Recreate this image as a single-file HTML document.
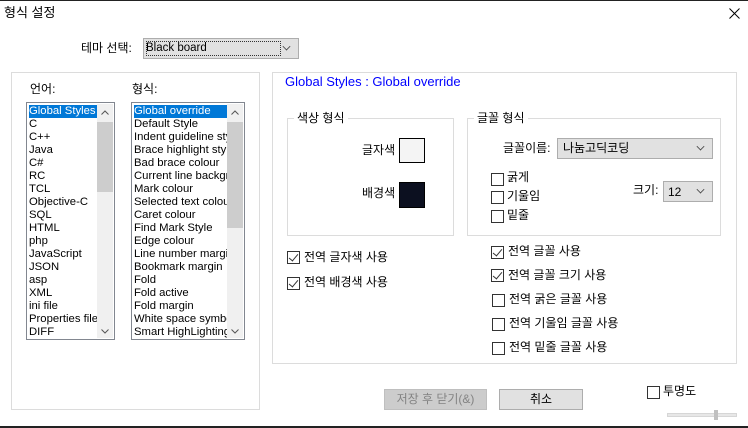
<!DOCTYPE html>
<html><head><meta charset="utf-8"><style>
*{box-sizing:border-box;margin:0;padding:0}
body{width:748px;height:427px;background:#fff;position:relative;overflow:hidden;font-family:"Liberation Sans","Noto Sans CJK KR",sans-serif;font-size:12px;color:#000;border-top:1px solid #222;}
.a{position:absolute;white-space:nowrap;line-height:13px}
.grp{position:absolute;border:1px solid #dcdcdc}
.combo{position:absolute;background:#e1e1e1;border:1px solid #adadad}
.combo .v{position:absolute;right:6px;top:3px;width:7px;height:7px;border-right:1px solid #444;border-bottom:1px solid #444;transform:rotate(45deg) scale(.8)}
.cb{position:absolute;width:13px;height:13px;border:1px solid #333;background:#fff}
.cb.c::after{content:"";position:absolute;left:3px;top:0px;width:4px;height:8px;border-right:1.3px solid #333;border-bottom:1.3px solid #333;transform:rotate(40deg)}
.lb{position:absolute;border:1px solid #828790;background:#fff;overflow:hidden;height:238px}
.lb .it{position:absolute;left:2px;line-height:13px;height:13px;white-space:nowrap;font-size:11.3px}
.sel{background:#0078d7;color:#fff}
.sb{position:absolute;top:1px;bottom:1px;width:16px;background:#f0f0f0}
.th{position:absolute;left:0;width:16px;background:#cdcdcd}
</style></head><body>
<div class="a" style="left:4px;top:5px;font-size:13px">형식 설정</div>
<svg style="position:absolute;left:729px;top:7px" width="11" height="11"><path d="M0.5 0.5L10.5 10.5M10.5 0.5L0.5 10.5" stroke="#000" stroke-width="1"/></svg>

<div class="a" style="left:81px;top:41px">테마 선택:</div>
<div class="combo" style="left:143px;top:37px;width:156px;height:21px"><div style="position:absolute;left:2px;top:2px;width:135px;height:15px;border:1px dotted #333"></div><div class="a" style="left:2px;top:3px;font-size:11.5px">Black board</div><div class="v" style="top:4px;right:8px"></div></div>

<div class="grp" style="left:11px;top:71px;width:249px;height:338px"></div>
<div class="a" style="left:30px;top:82px">언어:</div>
<div class="a" style="left:132px;top:82px">형식:</div>
<div class="lb" style="left:26px;top:101px;width:89px">
<div class="it sel" style="top:2px;width:68px">Global Styles</div>
<div class="it" style="top:15px">C</div><div class="it" style="top:28px">C++</div><div class="it" style="top:41px">Java</div><div class="it" style="top:54px">C#</div><div class="it" style="top:67px">RC</div><div class="it" style="top:80px">TCL</div><div class="it" style="top:93px">Objective-C</div><div class="it" style="top:106px">SQL</div><div class="it" style="top:119px">HTML</div><div class="it" style="top:132px">php</div><div class="it" style="top:145px">JavaScript</div><div class="it" style="top:158px">JSON</div><div class="it" style="top:171px">asp</div><div class="it" style="top:184px">XML</div><div class="it" style="top:197px">ini file</div><div class="it" style="top:210px">Properties file</div><div class="it" style="top:223px">DIFF</div>
<div class="sb" style="left:70px"><svg style="position:absolute;left:4px;top:6px" width="8" height="5"><path d="M0.5 4.5L4 1L7.5 4.5" stroke="#555" fill="none"/></svg><div class="th" style="top:18px;height:70px"></div><svg style="position:absolute;left:4px;top:225px" width="8" height="5"><path d="M0.5 0.5L4 4L7.5 0.5" stroke="#555" fill="none"/></svg></div>
</div>
<div class="lb" style="left:131px;top:101px;width:114px">
<div class="it sel" style="top:2px;width:93px">Global override</div>
<div class="it" style="top:15px">Default Style</div><div class="it" style="top:28px">Indent guideline sty</div><div class="it" style="top:41px">Brace highlight style</div><div class="it" style="top:54px">Bad brace colour</div><div class="it" style="top:67px">Current line backgro</div><div class="it" style="top:80px">Mark colour</div><div class="it" style="top:93px">Selected text colour</div><div class="it" style="top:106px">Caret colour</div><div class="it" style="top:119px">Find Mark Style</div><div class="it" style="top:132px">Edge colour</div><div class="it" style="top:145px">Line number margin</div><div class="it" style="top:158px">Bookmark margin</div><div class="it" style="top:171px">Fold</div><div class="it" style="top:184px">Fold active</div><div class="it" style="top:197px">Fold margin</div><div class="it" style="top:210px">White space symbol</div><div class="it" style="top:223px">Smart HighLighting</div>
<div class="sb" style="left:95px"><svg style="position:absolute;left:4px;top:6px" width="8" height="5"><path d="M0.5 4.5L4 1L7.5 4.5" stroke="#555" fill="none"/></svg><div class="th" style="top:18px;height:106px"></div><svg style="position:absolute;left:4px;top:225px" width="8" height="5"><path d="M0.5 0.5L4 4L7.5 0.5" stroke="#555" fill="none"/></svg></div>
</div>

<div class="grp" style="left:272px;top:71px;width:465px;height:292px"></div>
<div class="a" style="left:285px;top:74px;color:#0000ff;font-size:13px">Global Styles : Global override</div>

<div class="grp" style="left:287px;top:117px;width:167px;height:118px"></div>
<div class="a" style="left:294px;top:111px;background:#fff;padding:0 3px">색상 형식</div>
<div class="a" style="left:362px;top:143px">글자색</div>
<div style="position:absolute;left:399px;top:137px;width:26px;height:25px;border:1px solid #000;background:#f4f4f4"></div>
<div class="a" style="left:362px;top:186px">배경색</div>
<div style="position:absolute;left:399px;top:181px;width:26px;height:26px;border:1px solid #000;background:#0c1020"></div>

<div class="grp" style="left:467px;top:117px;width:254px;height:118px"></div>
<div class="a" style="left:474px;top:111px;background:#fff;padding:0 3px">글꼴 형식</div>
<div class="a" style="left:503px;top:141px">글꼴이름:</div>
<div class="combo" style="left:557px;top:137px;width:156px;height:21px"><div class="a" style="left:5px;top:3px">나눔고딕코딩</div><div class="v" style="top:4px;right:8px"></div></div>
<div class="cb" style="left:491px;top:172px"></div><div class="a" style="left:507px;top:170px">굵게</div>
<div class="cb" style="left:491px;top:190px"></div><div class="a" style="left:507px;top:189px">기울임</div>
<div class="cb" style="left:491px;top:209px"></div><div class="a" style="left:507px;top:208px">밑줄</div>
<div class="a" style="left:633px;top:183px">크기:</div>
<div class="combo" style="left:663px;top:180px;width:50px;height:21px"><div class="a" style="left:4px;top:4px">12</div><div class="v" style="top:4px;right:8px"></div></div>

<div class="cb c" style="left:287px;top:250px"></div><div class="a" style="left:304px;top:250px">전역 글자색 사용</div>
<div class="cb c" style="left:287px;top:276px"></div><div class="a" style="left:304px;top:275px">전역 배경색 사용</div>

<div class="cb c" style="left:491px;top:245px"></div><div class="a" style="left:508px;top:244px">전역 글꼴 사용</div>
<div class="cb c" style="left:491px;top:268px"></div><div class="a" style="left:508px;top:268px">전역 글꼴 크기 사용</div>
<div class="cb" style="left:492px;top:293px"></div><div class="a" style="left:509px;top:292px">전역 굵은 글꼴 사용</div>
<div class="cb" style="left:492px;top:317px"></div><div class="a" style="left:509px;top:316px">전역 기울임 글꼴 사용</div>
<div class="cb" style="left:492px;top:341px"></div><div class="a" style="left:509px;top:340px">전역 밑줄 글꼴 사용</div>

<div style="position:absolute;left:384px;top:388px;width:103px;height:21px;background:#cccccc;border:1px solid #bfbfbf;color:#838383;text-align:center;line-height:19px">저장 후 닫기(&amp;)</div>
<div style="position:absolute;left:499px;top:388px;width:84px;height:21px;background:#e1e1e1;border:1px solid #adadad;text-align:center;line-height:19px">취소</div>

<div class="cb" style="left:647px;top:385px"></div><div class="a" style="left:663px;top:384px">투명도</div>
<div style="position:absolute;left:667px;top:412px;width:70px;height:4px;background:#e7e7e7;border:1px solid #d6d6d6"></div>
<div style="position:absolute;left:714px;top:409px;width:4px;height:10px;background:#c0c0c0"></div>
<div style="position:absolute;left:0;top:425px;width:748px;height:2px;background:#222"></div>
</body></html>
